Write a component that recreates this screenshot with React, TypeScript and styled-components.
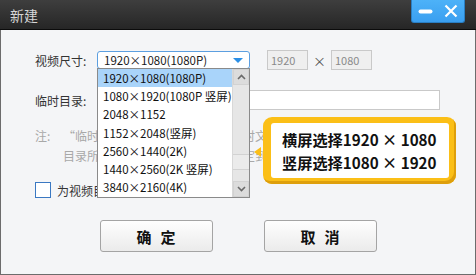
import React from "react";
import styled, { createGlobalStyle } from "styled-components";

const GlobalStyle = createGlobalStyle`
  html, body { margin: 0; padding: 0; background: #f4f5f7; }
  body { font-family: "Noto Sans CJK SC", "Noto Sans", sans-serif; }
  * { box-sizing: border-box; }
`;

const Window = styled.div`
  position: relative;
  width: 476px;
  height: 275px;
  display: flex;
  flex-direction: column;
  background: #f4f5f7;
  overflow: hidden;
`;

const TitleBar = styled.div`
  height: 30px;
  flex: none;
  display: flex;
  align-items: flex-start;
  background: linear-gradient(#3e3e3e, #262626);
  border-bottom: 1px solid #0b0b0b;
  padding: 0 11px 0 10px;
`;

const Title = styled.div`
  margin-top: 6px;
  font-size: 14px;
  line-height: 18px;
  color: #d6d6d6;
`;

const Controls = styled.div`
  margin-left: auto;
  width: 54px;
  height: 23px;
  display: flex;
  align-items: center;
  justify-content: space-between;
  padding: 0 6px 0 6px;
  background: linear-gradient(#4db2f8, #3a9ff0);
  border: 1px solid #2a7fc4;
  border-top: none;
  border-radius: 0 0 3px 3px;
`;

const Body = styled.div`
  position: relative;
  flex: 1;
  display: flex;
  flex-direction: column;
  padding: 20px 0 0 34px;
  border: 1px solid #6c6c6c;
  border-top: none;
`;

const Row = styled.div<{ $mt?: number }>`
  display: flex;
  align-items: center;
  height: 20px;
  margin-top: ${(p) => p.$mt ?? 0}px;
`;

const Label = styled.div`
  width: 62px;
  font-size: 12px;
  line-height: 19px;
  color: #333;
`;

const SelectWrap = styled.div`
  position: relative;
  width: 153px;
  height: 18px;
`;

const SelectBox = styled.div`
  height: 18px;
  display: flex;
  align-items: center;
  padding: 0 6px;
  border: 1px solid #5c9fe0;
  border-radius: 3px;
  background: #fff;
  font-size: 11.5px;
  color: #1a1a1a;
`;

const Caret = styled.div`
  margin-left: auto;
  width: 0;
  height: 0;
  border-left: 5px solid transparent;
  border-right: 5px solid transparent;
  border-top: 5px solid #2b8fe6;
`;

const DropList = styled.div`
  position: absolute;
  left: 0;
  top: 17px;
  width: 153px;
  height: 130px;
  display: flex;
  background: #fff;
  border: 1px solid #8a8a8a;
  z-index: 2;
`;

const Items = styled.div`
  flex: 1;
  display: flex;
  flex-direction: column;
`;

const Item = styled.div<{ $active?: boolean }>`
  height: 18.2px;
  display: flex;
  align-items: center;
  padding-left: 5px;
  font-size: 11.5px;
  color: #111;
  white-space: nowrap;
  background: ${(p) => (p.$active ? "#a9d4fa" : "transparent")};
`;

const ScrollBar = styled.div`
  width: 17px;
  display: flex;
  flex-direction: column;
  background: #e6e6e6;
  border-left: 1px solid #d8d8d8;
`;

const ScrollBtn = styled.div`
  height: 16px;
  display: flex;
  align-items: center;
  justify-content: center;
  background: #dcdcdc;
  border: 1px solid #d2d2d2;
`;

const Thumb = styled.div`
  height: 16px;
  margin-top: auto;
  margin-bottom: 11px;
  background: #ebebeb;
  border-top: 1px solid #d2d2d2;
  border-bottom: 1px solid #d2d2d2;
`;

const SizeInput = styled.div<{ $ml?: number }>`
  width: 41px;
  height: 20px;
  margin-left: ${(p) => p.$ml ?? 0}px;
  display: flex;
  align-items: center;
  padding-left: 3px;
  background: #efefef;
  border: 1px solid #c9c9c9;
  font-size: 11px;
  color: #8a8a8a;
`;

const Times = styled.div`
  width: 23px;
  text-align: center;
  font-size: 13px;
  color: #555;
`;

const PathInput = styled.div`
  width: 343px;
  height: 20px;
  background: #fff;
  border: 1px solid #c9c9c9;
`;

const Note = styled.div`
  margin-top: 16px;
  display: flex;
  font-size: 12px;
  line-height: 20px;
  color: #a8a8a8;
`;

const NoteHead = styled.div`
  width: 28px;
  flex: none;
`;

const NoteText = styled.div`
  display: flex;
  flex-direction: column;
  white-space: nowrap;
`;

const CheckRow = styled.label`
  margin-top: 16px;
  display: flex;
  align-items: center;
  height: 16px;
  font-size: 12px;
  color: #333;
`;

const CheckBox = styled.span`
  width: 16px;
  height: 16px;
  margin-right: 6px;
  background: #fff;
  border: 1px solid #3a78c2;
`;

const Buttons = styled.div`
  margin: 22px 0 0 -34px;
  display: flex;
  justify-content: center;
  gap: 51px;
`;

const Button = styled.button`
  width: 113px;
  height: 32px;
  padding: 0 0 0 9px;
  border: 1px solid #a4a4a4;
  border-radius: 3px;
  background: linear-gradient(#fefefe, #ebebeb);
  font-family: "Noto Sans CJK SC", sans-serif;
  font-size: 15px;
  font-weight: 700;
  letter-spacing: 9px;
  color: #111;
`;

const Callout = styled.div`
  position: absolute;
  left: 262px;
  top: 87px;
  width: 193px;
  height: 67px;
  padding: 6px 7px 6px 8px;
  border-radius: 9px;
  background: #fbbf17;
  box-shadow: inset -2px -3px 0 #de9f0c;
  z-index: 3;
`;

const Pointer = styled.div`
  position: absolute;
  left: -9px;
  top: 30px;
  width: 0;
  height: 0;
  border-top: 5px solid transparent;
  border-bottom: 5px solid transparent;
  border-right: 7px solid #fbbf17;
`;

const CalloutInner = styled.div`
  height: 100%;
  background: #fff;
  border-radius: 3px;
  padding: 5px 0 0 11px;
  font-size: 15.2px;
  font-weight: 700;
  line-height: 23px;
  color: #111;
  white-space: nowrap;
`;

const Chevron = ({ up }: { up?: boolean }) => (
  <svg width="9" height="6" viewBox="0 0 9 6">
    <path
      d={up ? "M1 5 L4.5 1.5 L8 5" : "M1 1 L4.5 4.5 L8 1"}
      fill="none"
      stroke="#6a6a6a"
      strokeWidth="1.6"
    />
  </svg>
);

const items = [
  "1920×1080(1080P)",
  "1080×1920(1080P 竖屏)",
  "2048×1152",
  "1152×2048(竖屏)",
  "2560×1440(2K)",
  "1440×2560(2K 竖屏)",
  "3840×2160(4K)",
];

export default function App() {
  return (
    <>
      <GlobalStyle />
      <Window>
        <TitleBar>
          <Title>新建</Title>
          <Controls>
            <svg width="15" height="5" viewBox="0 0 15 5">
              <rect x="0.5" y="0.5" width="14" height="4" rx="2" fill="#fff" />
            </svg>
            <svg width="14" height="14" viewBox="0 0 14 14">
              <path d="M1.5 1.5 L12.5 12.5 M12.5 1.5 L1.5 12.5" stroke="#fff" strokeWidth="2.2" />
            </svg>
          </Controls>
        </TitleBar>
        <Body>
          <Row>
            <Label>视频尺寸:</Label>
            <SelectWrap>
              <SelectBox>
                1920×1080(1080P)
                <Caret />
              </SelectBox>
              <DropList>
                <Items>
                  {items.map((t, i) => (
                    <Item key={t} $active={i === 0}>
                      {t}
                    </Item>
                  ))}
                </Items>
                <ScrollBar>
                  <ScrollBtn>
                    <Chevron up />
                  </ScrollBtn>
                  <Thumb />
                  <ScrollBtn>
                    <Chevron />
                  </ScrollBtn>
                </ScrollBar>
              </DropList>
            </SelectWrap>
            <SizeInput $ml={17}>1920</SizeInput>
            <Times>×</Times>
            <SizeInput>1080</SizeInput>
          </Row>
          <Row $mt={20}>
            <Label>临时目录:</Label>
            <PathInput />
          </Row>
          <Note>
            <NoteHead>注:</NoteHead>
            <NoteText>
              <span>“临时目录”用于存放剪辑中的临时文件，</span>
              <span>目录所在磁盘空间需足够大，请设定到更大的磁盘空间处。</span>
            </NoteText>
          </Note>
          <CheckRow>
            <CheckBox />
            为视频目录创建子文件夹
          </CheckRow>
          <Buttons>
            <Button>确定</Button>
            <Button>取消</Button>
          </Buttons>
          <Callout>
            <Pointer />
            <CalloutInner>
              横屏选择1920 × 1080
              <br />
              竖屏选择1080 × 1920
            </CalloutInner>
          </Callout>
        </Body>
      </Window>
    </>
  );
}
